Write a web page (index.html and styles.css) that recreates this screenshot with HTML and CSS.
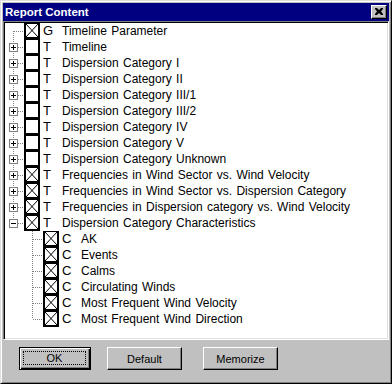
FILE: index.html
```html
<!doctype html>
<html lang="en">
  <head>
    <meta charset="UTF-8" />
    <title>Report Content</title>
    <link rel="stylesheet" href="styles.css">
  </head>
  <body>
    <div class="window">
      <div class="titlebar">
        <span class="caption">Report Content</span>
        <span class="close">
          <svg width="8" height="7" viewBox="0 0 8 7"><path d="M0 0h2l2 2 2-2h2v1L6 3.5 8 6v1H6L4 5 2 7H0V6l2-2.5L0 1z" /></svg>
        </span>
      </div>

      <div class="tree">
        <div class="row">
          <svg class="gut" width="19" height="16"><path class="dot" d="M8.5 8V16M9 8.5H19" /></svg>
          <span class="box on"><svg viewBox="0 0 12 13" preserveAspectRatio="none"><path d="M0 0L12 13M12 0L0 13" /></svg></span>
          <span class="kind">G</span><span class="label">Timeline Parameter</span>
        </div>
        <div class="row">
          <svg class="gut" width="19" height="16"><path class="dot" d="M8.5 0V16M13 8.5H19" /><rect class="exp" x="4.5" y="4.5" width="8" height="8" /><path class="sign" d="M6 8.5h5M8.5 6v5" /></svg>
          <span class="box"></span>
          <span class="kind">T</span><span class="label">Timeline</span>
        </div>
        <div class="row">
          <svg class="gut" width="19" height="16"><path class="dot" d="M8.5 0V16M13 8.5H19" /><rect class="exp" x="4.5" y="4.5" width="8" height="8" /><path class="sign" d="M6 8.5h5M8.5 6v5" /></svg>
          <span class="box"></span>
          <span class="kind">T</span><span class="label">Dispersion Category I</span>
        </div>
        <div class="row">
          <svg class="gut" width="19" height="16"><path class="dot" d="M8.5 0V16M13 8.5H19" /><rect class="exp" x="4.5" y="4.5" width="8" height="8" /><path class="sign" d="M6 8.5h5M8.5 6v5" /></svg>
          <span class="box"></span>
          <span class="kind">T</span><span class="label">Dispersion Category II</span>
        </div>
        <div class="row">
          <svg class="gut" width="19" height="16"><path class="dot" d="M8.5 0V16M13 8.5H19" /><rect class="exp" x="4.5" y="4.5" width="8" height="8" /><path class="sign" d="M6 8.5h5M8.5 6v5" /></svg>
          <span class="box"></span>
          <span class="kind">T</span><span class="label">Dispersion Category III/1</span>
        </div>
        <div class="row">
          <svg class="gut" width="19" height="16"><path class="dot" d="M8.5 0V16M13 8.5H19" /><rect class="exp" x="4.5" y="4.5" width="8" height="8" /><path class="sign" d="M6 8.5h5M8.5 6v5" /></svg>
          <span class="box"></span>
          <span class="kind">T</span><span class="label">Dispersion Category III/2</span>
        </div>
        <div class="row">
          <svg class="gut" width="19" height="16"><path class="dot" d="M8.5 0V16M13 8.5H19" /><rect class="exp" x="4.5" y="4.5" width="8" height="8" /><path class="sign" d="M6 8.5h5M8.5 6v5" /></svg>
          <span class="box"></span>
          <span class="kind">T</span><span class="label">Dispersion Category IV</span>
        </div>
        <div class="row">
          <svg class="gut" width="19" height="16"><path class="dot" d="M8.5 0V16M13 8.5H19" /><rect class="exp" x="4.5" y="4.5" width="8" height="8" /><path class="sign" d="M6 8.5h5M8.5 6v5" /></svg>
          <span class="box"></span>
          <span class="kind">T</span><span class="label">Dispersion Category V</span>
        </div>
        <div class="row">
          <svg class="gut" width="19" height="16"><path class="dot" d="M8.5 0V16M13 8.5H19" /><rect class="exp" x="4.5" y="4.5" width="8" height="8" /><path class="sign" d="M6 8.5h5M8.5 6v5" /></svg>
          <span class="box"></span>
          <span class="kind">T</span><span class="label">Dispersion Category Unknown</span>
        </div>
        <div class="row">
          <svg class="gut" width="19" height="16"><path class="dot" d="M8.5 0V16M13 8.5H19" /><rect class="exp" x="4.5" y="4.5" width="8" height="8" /><path class="sign" d="M6 8.5h5M8.5 6v5" /></svg>
          <span class="box on"><svg viewBox="0 0 12 13" preserveAspectRatio="none"><path d="M0 0L12 13M12 0L0 13" /></svg></span>
          <span class="kind">T</span><span class="label">Frequencies in Wind Sector vs. Wind Velocity</span>
        </div>
        <div class="row">
          <svg class="gut" width="19" height="16"><path class="dot" d="M8.5 0V16M13 8.5H19" /><rect class="exp" x="4.5" y="4.5" width="8" height="8" /><path class="sign" d="M6 8.5h5M8.5 6v5" /></svg>
          <span class="box on"><svg viewBox="0 0 12 13" preserveAspectRatio="none"><path d="M0 0L12 13M12 0L0 13" /></svg></span>
          <span class="kind">T</span><span class="label">Frequencies in Wind Sector vs. Dispersion Category</span>
        </div>
        <div class="row">
          <svg class="gut" width="19" height="16"><path class="dot" d="M8.5 0V16M13 8.5H19" /><rect class="exp" x="4.5" y="4.5" width="8" height="8" /><path class="sign" d="M6 8.5h5M8.5 6v5" /></svg>
          <span class="box on"><svg viewBox="0 0 12 13" preserveAspectRatio="none"><path d="M0 0L12 13M12 0L0 13" /></svg></span>
          <span class="kind">T</span><span class="label">Frequencies in Dispersion category vs. Wind Velocity</span>
        </div>
        <div class="row">
          <svg class="gut" width="19" height="16"><path class="dot" d="M8.5 0V8M13 8.5H19" /><rect class="exp" x="4.5" y="4.5" width="8" height="8" /><path class="sign" d="M6 8.5h5" /></svg>
          <span class="box on"><svg viewBox="0 0 12 13" preserveAspectRatio="none"><path d="M0 0L12 13M12 0L0 13" /></svg></span>
          <span class="kind">T</span><span class="label">Dispersion Category Characteristics</span>
        </div>

        <!-- children of Dispersion Category Characteristics -->
        <div class="row">
          <svg class="gut sub" width="38" height="16"><path class="dot" d="M27.5 0V16M28 8.5H38" /></svg>
          <span class="box on"><svg viewBox="0 0 12 13" preserveAspectRatio="none"><path d="M0 0L12 13M12 0L0 13" /></svg></span>
          <span class="kind">C</span><span class="label">AK</span>
        </div>
        <div class="row">
          <svg class="gut sub" width="38" height="16"><path class="dot" d="M27.5 0V16M28 8.5H38" /></svg>
          <span class="box on"><svg viewBox="0 0 12 13" preserveAspectRatio="none"><path d="M0 0L12 13M12 0L0 13" /></svg></span>
          <span class="kind">C</span><span class="label">Events</span>
        </div>
        <div class="row">
          <svg class="gut sub" width="38" height="16"><path class="dot" d="M27.5 0V16M28 8.5H38" /></svg>
          <span class="box on"><svg viewBox="0 0 12 13" preserveAspectRatio="none"><path d="M0 0L12 13M12 0L0 13" /></svg></span>
          <span class="kind">C</span><span class="label">Calms</span>
        </div>
        <div class="row">
          <svg class="gut sub" width="38" height="16"><path class="dot" d="M27.5 0V16M28 8.5H38" /></svg>
          <span class="box on"><svg viewBox="0 0 12 13" preserveAspectRatio="none"><path d="M0 0L12 13M12 0L0 13" /></svg></span>
          <span class="kind">C</span><span class="label">Circulating Winds</span>
        </div>
        <div class="row">
          <svg class="gut sub" width="38" height="16"><path class="dot" d="M27.5 0V16M28 8.5H38" /></svg>
          <span class="box on"><svg viewBox="0 0 12 13" preserveAspectRatio="none"><path d="M0 0L12 13M12 0L0 13" /></svg></span>
          <span class="kind">C</span><span class="label">Most Frequent Wind Velocity</span>
        </div>
        <div class="row">
          <svg class="gut sub" width="38" height="16"><path class="dot" d="M27.5 0V8M28 8.5H38" /></svg>
          <span class="box on"><svg viewBox="0 0 12 13" preserveAspectRatio="none"><path d="M0 0L12 13M12 0L0 13" /></svg></span>
          <span class="kind">C</span><span class="label">Most Frequent Wind Direction</span>
        </div>
      </div>

      <div class="actions">
        <button class="btn default"><span class="focus">OK</span></button>
        <button class="btn wide">Default</button>
        <button class="btn wide memo">Memorize</button>
      </div>
    </div>
  </body>
</html>
```

FILE: styles.css
```css
body {
  margin: 0;
  font-family: "Liberation Sans", Arial, sans-serif;
  font-size: 12px;
  color: #000;
}
.window {
  box-sizing: border-box;
  width: 392px;
  height: 384px;
  padding: 2px;
  background: #c0c0c0;
  border: 1px solid;
  border-color: #dfdfdf #000 #000 #dfdfdf;
  box-shadow: inset 1px 1px #fff, inset -1px -1px #808080;
  display: flex;
  flex-direction: column;
}
.titlebar {
  height: 18px;
  background: #000080;
  display: flex;
  align-items: center;
  justify-content: space-between;
  padding: 0 2px;
}
.caption {
  color: #fff;
  font-weight: bold;
  font-size: 11.5px;
}
.close {
  box-sizing: border-box;
  width: 16px;
  height: 14px;
  background: #c0c0c0;
  border: 1px solid;
  border-color: #fff #000 #000 #fff;
  box-shadow: inset -1px -1px #808080;
  display: flex;
  align-items: center;
  justify-content: center;
  padding: 0 1px 1px 0;
}
.close svg {
  display: block;
  fill: #000;
}
.tree {
  box-sizing: border-box;
  height: 319px;
  background: #fff;
  border: 1px solid;
  border-color: #808080 #fff #fff #808080;
  box-shadow: inset 1px 1px #000, inset -1px -1px #dfdfdf;
  padding: 1px;
}
.row {
  height: 16px;
  display: flex;
  align-items: center;
  line-height: 16px;
  white-space: nowrap;
}
.gut {
  flex: none;
  display: block;
  shape-rendering: crispEdges;
}
.dot {
  fill: none;
  stroke: #808080;
  stroke-dasharray: 1 1;
}
.exp {
  fill: #fff;
  stroke: #808080;
}
.sign {
  stroke: #000;
  fill: none;
}
.box {
  flex: none;
  box-sizing: border-box;
  width: 16px;
  height: 16px;
  border: solid #000;
  border-width: 1px 2px 2px;
  background: #fff;
}
.box svg {
  display: block;
  width: 12px;
  height: 13px;
  stroke: #000;
  stroke-width: 1;
}
.kind {
  flex: none;
  width: 19px;
  padding-left: 3px;
  font-size: 13px;
}
.label {
  font-size: 12px;
  word-spacing: 1px;
}
.actions {
  flex: 1;
  display: flex;
  align-items: flex-start;
  padding: 7px 0 0 16px;
}
.btn {
  box-sizing: border-box;
  height: 23px;
  width: 75px;
  margin: 0;
  padding: 0;
  font: 11px "Liberation Sans", Arial, sans-serif;
  color: #000;
  background: #c0c0c0;
  border: 1px solid;
  border-color: #fff #000 #000 #fff;
  box-shadow: inset -1px -1px #808080;
}
.btn.default {
  width: 72px;
  border-color: #000;
  box-shadow: inset 1px 1px #fff, inset -1px -1px #000, inset -2px -2px #808080;
  display: flex;
  padding: 3px 4px 4px 3px;
  margin-right: 16px;
}
.focus {
  flex: 1;
  display: flex;
  align-items: center;
  justify-content: center;
  border: 1px dotted #000;
}
.btn.memo {
  margin-left: 21px;
}
```
